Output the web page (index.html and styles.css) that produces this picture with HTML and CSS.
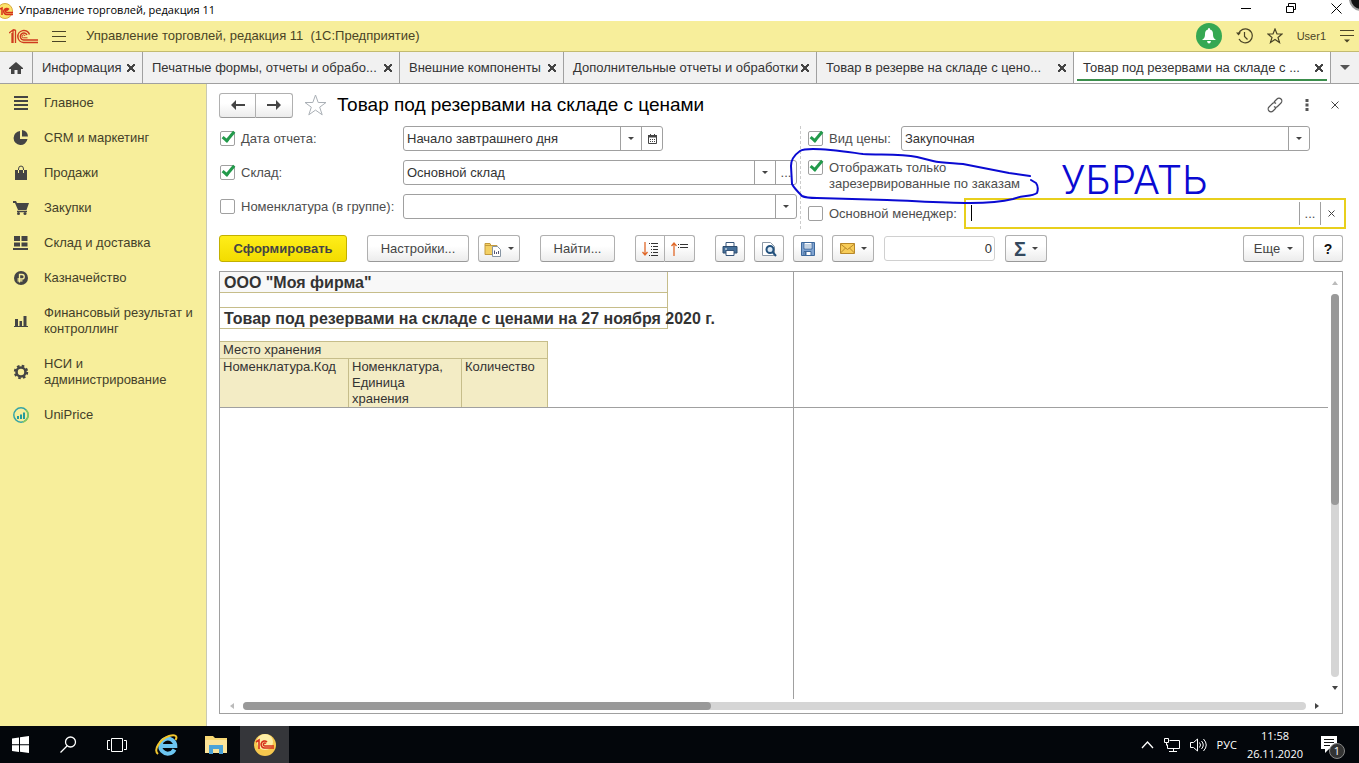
FILE: index.html
```html
<!DOCTYPE html>
<html lang="ru">
<head>
<meta charset="utf-8">
<title>Управление торговлей, редакция 11</title>
<link rel="stylesheet" href="styles.css">
</head>
<body>

<!-- window title -->
<div class="titlebar">
  <svg class="titlebar-logo" width="14" height="16" viewBox="0 0 14 16">
    <circle cx="5" cy="8" r="7.5" fill="#fbe36a" stroke="#d9a93c"/>
    <path d="M0 6l2-1v7M9 6.500a3 3 0 1 0-2 5h6M8 7.500a1.300 1.300 0 1 0-1 2h6" fill="none" stroke="#d6301c" stroke-width="1.500"/>
  </svg>
  <span class="titlebar-text">Управление торговлей, редакция 11</span>
  <div class="window-buttons">
    <button aria-label="Свернуть"><svg width="11" height="11"><path d="M0 5.500h10" stroke="#000" fill="none"/></svg></button>
    <button aria-label="Восстановить"><svg width="11" height="11"><path d="M.5 3.500h7v6h-7zM2.500 3.500v-3h7v6h-2" stroke="#000" fill="none"/></svg></button>
    <button aria-label="Закрыть"><svg width="11" height="11"><path d="M.5.500l10 10M10.500.500l-10 10" stroke="#000" fill="none"/></svg></button>
  </div>
  <div class="corner-badge"></div>
</div>

<!-- application bar -->
<header class="appbar">
  <svg class="logo" width="29" height="15" viewBox="0 0 29 15">
    <path d="M0 4l4-3v13M3 4v10M6.500 1v13M4 1h2.500" fill="none" stroke="#cf3a1e" stroke-width="1.300"/>
    <path d="M20.500 5.500a6 6 0 1 0-6 8H29M18 6a3.500 3.500 0 1 0-3.500 5H29" fill="none" stroke="#cf3a1e" stroke-width="1.500"/>
    <path d="M16 7a1.500 1.500 0 1 0-1.500 1.800h4" fill="none" stroke="#cf3a1e"/>
  </svg>
  <button class="bar-icon" aria-label="Меню"><svg width="14" height="11"><path d="M0 .5h14M0 5.500h14M0 10.500h14" stroke="#4a4426"/></svg></button>
  <span class="appbar-title">Управление торговлей, редакция 11&nbsp; (1С:Предприятие)</span>
  <div class="appbar-tools">
    <button class="bell" aria-label="Уведомления">
      <svg width="14" height="16" viewBox="0 0 14 16"><path d="M7 0c1 0 1 1 1 1.500 2 .5 3 2 3 4.500 0 3 .5 4 3 6H0c2.500-2 3-3 3-6 0-2.500 1-4 3-4.500C6 1 6 0 7 0zM5 13h4q-.5 2.500-2 2.500T5 13z" fill="#fff"/></svg>
    </button>
    <button class="bar-icon" aria-label="История">
      <svg width="17" height="16" viewBox="0 0 17 16"><path d="M2.500 6A7 7 0 1 1 3 11M8.500 4v4.500l3 3" fill="none" stroke="#4a4426" stroke-width="1.200"/><path d="M0 4.500h5l-2.500 3z" fill="#4a4426"/></svg>
    </button>
    <button class="bar-icon" aria-label="Избранное">
      <svg width="16" height="16" viewBox="0 0 16 16"><path d="M8 1l2 5h5l-4 3.500 1.500 5L8 11.500l-4.500 3 1.500-5L1 6h5z" fill="none" stroke="#4a4426" stroke-width="1.200"/></svg>
    </button>
    <a class="user" href="#">User1</a>
    <button class="bar-icon" aria-label="Сервис">
      <svg width="14" height="13"><path d="M0 .5h14M0 5.500h14" stroke="#4a4426"/><path d="M4 9.500h6l-3 3z" fill="#4a4426"/></svg>
    </button>
  </div>
</header>

<!-- open pages -->
<nav class="tabs">
  <a class="tab tab-home" href="#" aria-label="Начальная страница"><svg width="14" height="12" viewBox="0 0 14 12"><path d="M7 0l7 6v1h-2v5H8.500V8h-3v4H2V7H0V6z" fill="#444"/></svg></a>
  <a class="tab" href="#"><span>Информация</span><i class="close"></i></a>
  <a class="tab" href="#"><span>Печатные формы, отчеты и обрабо...</span><i class="close"></i></a>
  <a class="tab" href="#"><span>Внешние компоненты</span><i class="close"></i></a>
  <a class="tab" href="#"><span>Дополнительные отчеты и обработки</span><i class="close"></i></a>
  <a class="tab" href="#"><span>Товар в резерве на складе с цено...</span><i class="close"></i></a>
  <a class="tab active" href="#"><span>Товар под резервами на складе с ...</span><i class="close"></i></a>
  <button class="tab-more" aria-label="Все страницы"><svg width="10" height="5"><path d="M0 0h10L5 5z" fill="#555"/></svg></button>
</nav>

<div class="workspace">
  <nav class="sidebar">
    <a href="#"><svg width="16" height="16"><path d="M1 2h14M1 6h14M1 10h14M1 14h14" stroke="#444" stroke-width="2"/></svg>Главное</a>
    <a href="#"><svg width="16" height="16"><path d="M7 1v8h7.500A7 7 0 1 1 7 1z" fill="#444"/><path d="M9 0a7 7 0 0 1 6 6.500H9z" fill="#444"/></svg>CRM и маркетинг</a>
    <a href="#"><svg width="16" height="16"><path d="M2 5h12v10H2z" fill="#444"/><path d="M5.500 8V4q0-3 2.500-3t2.500 3v4" fill="none" stroke="#444"/><path d="M5.500 5v3M10.500 5v3" stroke="#f7ee9b"/></svg>Продажи</a>
    <a href="#"><svg width="16" height="16"><path d="M0 1h3l1 2h12l-2.500 7H5L2 3H0z" fill="#444"/><path d="M4 11.500h10" stroke="#444" stroke-width="1.500"/><circle cx="5.500" cy="13.500" r="1.500" fill="#444"/><circle cx="12" cy="13.500" r="1.500" fill="#444"/></svg>Закупки</a>
    <a href="#"><svg width="16" height="16"><path d="M1 1h6v5H1zM8.500 1h6v5h-6zM1 7.500h6v4H1zM8.500 7.500h6v4h-6zM0 13h15v2H0z" fill="#444"/></svg>Склад и доставка</a>
    <a href="#"><svg width="16" height="16"><circle cx="8" cy="8" r="7" fill="#444"/><path d="M6.500 12.500V4.500H9a2.200 2.200 0 0 1 0 4.500H4.500M4.500 10.800h5" fill="none" stroke="#f7ee9b" stroke-width="1.300"/></svg>Казначейство</a>
    <a href="#"><svg width="16" height="16"><path d="M2 6h3v7H2zM6.500 8h2.500v5H6.500zM10.500 3h3v10h-3zM1 13h14v1H1z" fill="#444"/></svg>Финансовый результат и контроллинг</a>
    <a href="#"><svg width="16" height="16"><circle cx="8" cy="8" r="4.500" fill="none" stroke="#444" stroke-width="2.600"/><circle cx="8" cy="8" r="6.200" fill="none" stroke="#444" stroke-width="2" stroke-dasharray="2.600 2.270"/></svg>НСИ и администрирование</a>
    <a href="#"><svg width="16" height="16"><circle cx="8" cy="8" r="7.200" fill="none" stroke="#35a3a5" stroke-width="1.500"/><path d="M13 3a7.200 7.200 0 0 1-3 12" fill="none" stroke="#8ccb56" stroke-width="1.500"/><path d="M4 9h2v3H4zM7 7.500h2V12H7zM10 5.500h2V12h-2z" fill="#259a9c"/></svg>UniPrice</a>
  </nav>

  <main class="page">
    <div class="page-head">
      <div class="button-group">
        <button class="btn" aria-label="Назад"><svg width="14" height="10"><path d="M5 0v4h9v2H5v4L0 5z" fill="#444"/></svg></button>
        <button class="btn" aria-label="Вперед"><svg width="14" height="10"><path d="M9 0v4H0v2h9v4l5-5z" fill="#444"/></svg></button>
      </div>
      <svg class="fav" width="23" height="22" viewBox="0 0 23 22"><path d="M11.500 1l2.700 7.500H22l-6.300 4.700 2.500 7.600-6.700-4.700-6.700 4.700 2.500-7.600L1 8.500h7.800z" fill="#fff" stroke="#aab0b6"/></svg>
      <h1>Товар под резервами на складе с ценами</h1>
      <div class="page-tools">
        <button aria-label="Ссылка"><svg width="16" height="16" viewBox="0 0 16 16"><path d="M7 5l3-3a2.600 2.600 0 0 1 4 4l-3.500 3.500a2.600 2.600 0 0 1-3.500 0M9 11l-3 3a2.600 2.600 0 0 1-4-4l3.500-3.500a2.600 2.600 0 0 1 3.500 0" fill="none" stroke="#555" stroke-width="1.200"/></svg></button>
        <button aria-label="Еще"><svg width="4" height="12"><path d="M.5 0h3v3h-3zM.5 4.500h3v3h-3zM.5 9h3v3h-3z" fill="#555"/></svg></button>
        <button aria-label="Закрыть"><svg width="8" height="8"><path d="M.5.500l7 7M7.500.500l-7 7" stroke="#444"/></svg></button>
      </div>
    </div>

    <form class="filters">
      <div class="filters-left">
        <div class="row">
          <input type="checkbox" id="use-date" checked><label for="use-date">Дата отчета:</label>
          <div class="field field-date">
            <input type="text" value="Начало завтрашнего дня" aria-label="Дата отчета">
            <button type="button" class="drop" aria-label="Выбрать"></button>
            <button type="button" aria-label="Календарь"><svg width="9" height="10"><path d="M.5 1.500h8v8h-8z" fill="none" stroke="#444"/><path d="M0 1h9v2.500H0zM2 0h1v2H2zM6 0h1v2H6zM2 5h1v1H2zM4 5h1v1H4zM6 5h1v1H6zM2 7h1v1H2zM4 7h1v1H4zM6 7h1v1H6z" fill="#444"/></svg></button>
          </div>
        </div>
        <div class="row">
          <input type="checkbox" id="use-store" checked><label for="use-store">Склад:</label>
          <div class="field">
            <input type="text" value="Основной склад" aria-label="Склад">
            <button type="button" class="drop" aria-label="Выбрать"></button>
            <button type="button" aria-label="Открыть список">...</button>
          </div>
        </div>
        <div class="row">
          <input type="checkbox" id="use-item"><label for="use-item">Номенклатура (в группе):</label>
          <div class="field">
            <input type="text" value="" aria-label="Номенклатура">
            <button type="button" class="drop" aria-label="Выбрать"></button>
          </div>
        </div>
      </div>

      <div class="filters-right">
        <div class="row row-price">
          <input type="checkbox" id="use-price" checked><label for="use-price">Вид цены:</label>
          <div class="field">
            <input type="text" value="Закупочная" aria-label="Вид цены">
            <button type="button" class="drop" aria-label="Выбрать"></button>
          </div>
        </div>
        <div class="row row-reserved">
          <input type="checkbox" id="only-reserved" checked><label for="only-reserved">Отображать только<br>зарезервированные по заказам</label>
        </div>
        <div class="row row-manager">
          <input type="checkbox" id="use-manager"><label for="use-manager">Основной менеджер:</label>
          <div class="field focused">
            <span class="caret"></span>
            <input type="text" value="" aria-label="Основной менеджер">
            <button type="button" aria-label="Открыть список">...</button>
            <button type="button" aria-label="Очистить"><svg width="7" height="7"><path d="M.5.500l6 6M6.500.500l-6 6" stroke="#444"/></svg></button>
          </div>
        </div>

        <!-- pen marks over the form -->
        <svg class="ink" width="250" height="56" viewBox="0 0 250 56">
          <path d="M239 27L218 24L172 15C160 14 150 14 142 12L126 8C110 5 90 6 72 5C50 2 38 0 22 0C16 0 12 0 9 2C2 7 0 11 0 17L1 35C3 39 8 44 11 47C15 49 20 49 26 49L96 51C125 52 150 54 179 54C195 54 210 53 222 50C232 46 240 48 246 44Q248 38 245 34L240 31" fill="none" stroke="#0a0ad2" stroke-width="2" stroke-linecap="round" stroke-linejoin="round"/>
        </svg>
        <span class="ink-text">УБРАТЬ</span>
      </div>
    </form>

    <div class="toolbar">
      <button class="btn btn-main">Сформировать</button>
      <div class="tool-set">
        <button class="btn btn-text">Настройки...</button>
        <button class="btn btn-menu" aria-label="Варианты отчета"><svg width="18" height="16"><path d="M1 2.500h5l1 2h6v9H1z" fill="#f3d064" stroke="#c49a3c"/><path d="M1 4.500h12" stroke="#c49a3c"/><path d="M8.500 5.500h5l3 3v7h-8z" fill="#fff" stroke="#8795a3"/><path d="M10.500 13V9.500M12.500 13v-2M14.500 13v-3" stroke="#557"/></svg><i class="arrow"></i></button>
      </div>
      <button class="btn btn-find">Найти...</button>
      <div class="button-group">
        <button class="btn btn-icon" aria-label="Развернуть"><svg width="17" height="16"><path d="M3 1v13M.5 11L3 14l2.500-3" fill="none" stroke="#e0692a" stroke-width="1.300"/><path d="M7 2.500h9M9 5.500h7M9 8.500h7M9 11.500h7M7 14.500h9" stroke="#333" stroke-dasharray="1 1 7"/></svg></button>
        <button class="btn btn-icon" aria-label="Свернуть"><svg width="17" height="16"><path d="M3 15V2M.5 5L3 2l2.500 3" fill="none" stroke="#e0692a" stroke-width="1.300"/><path d="M7 3.500h10M7 6.500h10" stroke="#333" stroke-dasharray="1 1 8"/></svg></button>
      </div>
      <div class="tool-set">
        <button class="btn btn-icon" aria-label="Печать"><svg width="16" height="16"><path d="M4 1.500h8V6H4z" fill="#fff" stroke="#37557a"/><path d="M1 5.500h14v6.500H1z" fill="#456f99" stroke="#2d4c6f"/><path d="M3 8h2" stroke="#fff"/><path d="M4 9.500h8v5H4z" fill="#fff" stroke="#37557a"/></svg></button>
        <button class="btn btn-icon" aria-label="Предварительный просмотр"><svg width="16" height="16"><path d="M1.500 1.500h8l4 4v9h-12z" fill="#fff" stroke="#8a97a5"/><circle cx="9" cy="8.500" r="3.500" fill="#dbe9f5" stroke="#24527e" stroke-width="2"/><path d="M11.500 11l3.500 4" stroke="#24527e" stroke-width="2"/></svg></button>
        <button class="btn btn-icon" aria-label="Сохранить"><svg width="16" height="16"><path d="M1.500 1.500h13v13h-13z" fill="#7fa3d0" stroke="#3e699c"/><path d="M4 1.500h8V8H4zM4 10.500h7v4H4z" fill="#fff" stroke="#3e699c"/><path d="M5 4h6M5 6h6" stroke="#8ba8c7"/><path d="M5.500 11v3" stroke="#3e699c" stroke-width="2"/></svg></button>
        <button class="btn btn-menu" aria-label="Отправить"><svg width="15" height="11"><path d="M.5.500h14v10H.5z" fill="#f7cc58" stroke="#b8882a"/><path d="M.5 1l7 5.500 7-5.500M.5 10l5-5M14.500 10l-5-5" fill="none" stroke="#b8882a"/></svg><i class="arrow"></i></button>
        <input class="total" type="text" value="0" aria-label="Сумма">
        <button class="btn btn-menu" aria-label="Функция"><b class="sigma">Σ</b><i class="arrow"></i></button>
      </div>
      <div class="tool-set tool-end">
        <button class="btn btn-more">Еще<i class="arrow"></i></button>
        <button class="btn btn-icon btn-help">?</button>
      </div>
    </div>

    <section class="report">
      <div class="sheet">
        <div class="cell-area top-left">
          <div class="caption caption-firm">ООО "Моя фирма"</div>
          <div class="caption-gap"></div>
          <div class="caption caption-title">Товар под резервами на складе с ценами на 27 ноября 2020 г.</div>
          <table>
            <colgroup><col class="col-code"><col class="col-unit"><col></colgroup>
            <tr><th colspan="3">Место хранения</th></tr>
            <tr><th>Номенклатура.Код</th><th>Номенклатура, Единица хранения</th><th>Количество</th></tr>
          </table>
        </div>
        <div class="cell-area top-right"></div>
        <div class="cell-area bottom-left"></div>
        <div class="cell-area"></div>
      </div>
      <div class="scroll scroll-v">
        <svg width="6" height="4"><path d="M0 4h6L3 0z" fill="#bbb"/></svg>
        <div class="track"><div class="thumb"></div></div>
        <svg width="6" height="4"><path d="M0 0h6L3 4z" fill="#444"/></svg>
      </div>
      <div class="scroll scroll-h">
        <svg width="4" height="6"><path d="M4 0v6L0 3z" fill="#bbb"/></svg>
        <div class="track"><div class="thumb"></div></div>
        <svg width="4" height="6"><path d="M0 0v6l4-3z" fill="#444"/></svg>
      </div>
    </section>
  </main>
</div>

<footer class="taskbar">
  <button aria-label="Пуск"><svg width="17" height="17"><path d="M0 2.500l7-1v6.700H0zM8 1.300L17 0v8.200H8zM0 9.200h7V16l-7-1zM8 9.200h9V17l-9-1.300z" fill="#fff"/></svg></button>
  <button aria-label="Поиск"><svg width="17" height="17"><circle cx="10.500" cy="6" r="5" fill="none" stroke="#fff" stroke-width="1.300"/><path d="M7 10L.5 16.500" stroke="#fff" stroke-width="1.300"/></svg></button>
  <button aria-label="Представление задач"><svg width="21" height="14"><path d="M4.500.500h11v13h-11zM3 2.500H.5v9H3M17 2.500h2.500v9H17" fill="none" stroke="#fff"/></svg></button>
  <button aria-label="Internet Explorer"><svg width="24" height="24" viewBox="0 0 24 24"><path d="M19.500 16.500a7.500 7.500 0 1 1 .8-3.500H6" fill="none" stroke="#6cc5f1" stroke-width="4"/><path d="M3 21C-2 17 5 6 14 3c6-2 9 0 6.500 4" fill="none" stroke="#f2c62e" stroke-width="2"/></svg></button>
  <button aria-label="Проводник"><svg width="22" height="20"><path d="M0 1h8l2 2h12v15H0z" fill="#f7d774"/><path d="M0 5h22v13H0z" fill="#fbe49a"/><path d="M4 10h14v9h-4v-5H8v5H4z" fill="#4ba3d8"/></svg></button>
  <button class="running" aria-label="1С:Предприятие"><svg width="22" height="22"><circle cx="11" cy="11" r="11" fill="#f6c84e"/><circle cx="11" cy="8" r="8" fill="#fdeea6"/><path d="M2 8l3-2v9M13 8a3.500 3.500 0 1 0-2 6h9M12 9.500a1.500 1.500 0 1 0-1 2.500h9" fill="none" stroke="#d6301c" stroke-width="1.600"/></svg></button>
  <div class="tray">
    <svg width="13" height="8"><path d="M1 7l5.500-6L12 7" fill="none" stroke="#fff" stroke-width="1.300"/></svg>
    <svg width="16" height="14"><path d="M5.500 2.500h10v8H3.500v-4M9.500 10.500v3M5 13.500h8M.5.500h4v4h-4zM2.500 4.500v3" fill="none" stroke="#fff"/></svg>
    <svg width="17" height="14"><path d="M.5 4.500h3l4-3.500v12l-4-3.500h-3zM9.500 4.500q2 2.500 0 5M11.500 3q3.500 4 0 8M13.500 1q5.500 6 0 12" fill="none" stroke="#fff"/></svg>
    <span>РУС</span>
    <div class="clock">11:58<br>26.11.2020</div>
    <button class="notices" aria-label="Центр уведомлений"><svg width="16" height="17"><path d="M0 0h16v13H8l-4 4v-4H0z" fill="#fff"/><path d="M3 3.500h10M3 6.500h10M3 9.500h6" stroke="#111"/></svg><span class="count">1</span></button>
  </div>
</footer>

</body>
</html>
```

FILE: styles.css
```css
* {
  box-sizing: border-box;
}

body {
  margin: 0;
  height: 100vh;
  display: flex;
  flex-direction: column;
  overflow: hidden;
  font: 13px/16px "Liberation Sans", Arial, sans-serif;
  color: #4d4d4d;
  background: #fff;
}

button {
  margin: 0;
  padding: 0;
  border: none;
  background: none;
  font: inherit;
  color: inherit;
  display: flex;
  align-items: center;
  justify-content: center;
}

a {
  color: inherit;
  text-decoration: none;
}

svg {
  flex: none;
}

/* window title */
.titlebar {
  position: relative;
  height: 21px;
  flex: none;
  display: flex;
  align-items: center;
  overflow: hidden;
}

.titlebar-text {
  flex: 1;
  margin-left: 5px;
  padding-bottom: 2px;
  font: 11px/16px "Open Sans", "Noto Sans", sans-serif;
  color: #000;
}

.window-buttons {
  display: flex;
  gap: 34px;
  margin-right: 17px;
  padding-bottom: 5px;
}

.corner-badge {
  position: absolute;
  right: -14px;
  top: -13px;
  width: 24px;
  height: 24px;
  border: 2px solid #999;
  border-radius: 50%;
  background: #111;
}

/* application bar */
.appbar {
  height: 31px;
  flex: none;
  display: flex;
  align-items: center;
  padding: 0 5px 0 9px;
  background: #f7ee9b;
  border-bottom: 1px solid #c3bb70;
  color: #4a4426;
}

.logo {
  margin-right: 14px;
}

.appbar-title {
  flex: 1;
  margin-left: 20px;
}

.appbar-tools {
  display: flex;
  align-items: center;
  gap: 14px;
}

.bell {
  width: 26px;
  height: 26px;
  border-radius: 50%;
  background: #36a853;
}

.user {
  font-size: 11px;
}

/* open pages */
.tabs {
  height: 32px;
  flex: none;
  display: grid;
  grid-template-columns: 32px 110fr 257fr 164fr 253fr 257fr 257fr 29px;
  background: #f1f1f1;
  border-bottom: 1px solid #a0a0a0;
}

.tab {
  display: flex;
  align-items: center;
  justify-content: space-between;
  min-width: 0;
  padding: 0 7px 0 9px;
  border-left: 1px solid #a0a0a0;
  color: #333;
}

.tab span {
  white-space: nowrap;
}

.tab-home {
  justify-content: center;
  padding: 0;
  border-left: none;
}

.tab.active {
  background: linear-gradient(#3b8e4c, #3b8e4c) center bottom 2px / calc(100% - 6px) 2px no-repeat #fff;
}

.close {
  width: 8px;
  height: 8px;
  background:
    linear-gradient(45deg, transparent 40%, #444 40%, #444 60%, transparent 60%),
    linear-gradient(-45deg, transparent 40%, #444 40%, #444 60%, transparent 60%);
}

.tab-more {
  border-left: 1px solid #a0a0a0;
}

/* sections */
.workspace {
  flex: 1;
  min-height: 0;
  display: flex;
}

.sidebar {
  width: 207px;
  flex: none;
  padding-top: 2px;
  background: #f7ee9b;
  border-right: 1px solid #c9c9b4;
  color: #443f2a;
}

.sidebar a {
  display: flex;
  align-items: center;
  gap: 15px;
  padding: 9px 10px 10px 13px;
}

/* report page */
.page {
  flex: 1;
  min-width: 0;
  display: flex;
  flex-direction: column;
  padding: 8px 16px 12px 12px;
}

.page-head {
  display: flex;
  align-items: center;
  height: 26px;
}

.button-group {
  display: flex;
}

.button-group .btn:first-child {
  border-radius: 3px 0 0 3px;
}

.button-group .btn:last-child {
  border-left: none;
  border-radius: 0 3px 3px 0;
}

.page-head .btn {
  width: 37px;
  height: 25px;
}

.fav {
  margin: 0 10px 0 11px;
}

h1 {
  flex: 1;
  margin: 0;
  font-size: 19px;
  line-height: 24px;
  font-weight: normal;
  color: #000;
}

.page-tools {
  display: flex;
  gap: 22px;
  margin-right: 4px;
}

.filters {
  display: grid;
  grid-template-columns: 578fr 546fr;
  gap: 3px;
  margin: 8px -3px 6px 0;
}

.filters-left {
  display: flex;
  flex-direction: column;
  gap: 9px;
}

.filters-right {
  position: relative;
  padding-left: 6px;
  border-left: 1px dashed #ccc;
}

.row {
  display: flex;
  align-items: center;
}

.filters-left label {
  width: 162px;
  flex: none;
}

.row label {
  white-space: nowrap;
}

input[type="checkbox"] {
  appearance: none;
  flex: none;
  position: relative;
  width: 15px;
  height: 15px;
  margin: 0 6px 0 1px;
  border: 1px solid #a0a0a0;
  border-radius: 2px;
  background: #fff;
}

input[type="checkbox"]:checked::after {
  content: "";
  position: absolute;
  left: 4px;
  top: -3px;
  width: 4px;
  height: 10px;
  border: solid #229a4b;
  border-width: 0 3px 3px 0;
  transform: rotate(40deg);
}

.field {
  flex: 1;
  min-width: 0;
  height: 25px;
  display: flex;
  border: 1px solid #a0a0a0;
  border-radius: 3px;
  background: #fff;
}

.field input {
  flex: 1;
  min-width: 0;
  padding: 0 3px;
  border: none;
  outline: none;
  background: none;
  font: inherit;
  color: #333;
}

.field button {
  width: 21px;
  border-left: 1px solid #a0a0a0;
}

.field-date {
  flex: none;
  width: 260px;
}

.drop::after,
.arrow {
  content: "";
  border: solid transparent;
  border-width: 3px 3px 0;
  border-top-color: #444;
}

.row-price {
  margin-right: 36px;
}

.row-price label {
  width: 72px;
}

.row-reserved {
  align-items: flex-start;
  margin: 9px 0 6px;
}

.row-manager label {
  width: 135px;
}

.field.focused {
  height: 31px;
  padding: 2px;
  border: 2px solid #e8cf1c;
  border-radius: 0;
}

.focused button:last-child {
  width: 22px;
}

.caret {
  width: 1px;
  margin: 3px 0 4px 3px;
  background: #000;
}

.ink {
  position: absolute;
  left: -10px;
  top: 23px;
  overflow: visible;
  pointer-events: none;
}

.ink-text {
  position: absolute;
  left: 260px;
  top: 34px;
  font: 300 40px/40px Inter, "Liberation Sans", sans-serif;
  color: #0a0ad2;
  pointer-events: none;
}

/* commands */
.toolbar {
  display: flex;
  gap: 20px;
  margin-bottom: 9px;
}

.tool-set {
  display: flex;
  gap: 9px;
}

.tool-end {
  margin-left: auto;
}

.btn {
  height: 27px;
  border: 1px solid #b0b0b0;
  border-bottom-color: #999;
  border-radius: 3px;
  background: linear-gradient(#fff 40%, #ececec);
  color: #444;
}

.btn-main {
  width: 128px;
  border-color: #c2b000;
  background: linear-gradient(#ffee1a, #f2dc00);
  font-weight: bold;
}

.btn-text {
  width: 102px;
}

.btn-find {
  width: 75px;
}

.btn-icon {
  width: 30px;
}

.btn-menu {
  width: 42px;
  gap: 6px;
}

.btn-more {
  width: 61px;
  gap: 7px;
}

.btn-help {
  font-size: 14px;
  font-weight: bold;
  color: #111;
}

.sigma {
  font-size: 20px;
  color: #34495e;
}

.total {
  width: 111px;
  height: 25px;
  margin: 1px;
  padding: 0 2px;
  border: 1px solid #d0d0d0;
  border-radius: 3px;
  font: inherit;
  color: #333;
  text-align: right;
}

/* spreadsheet */
.report {
  flex: 1;
  min-height: 0;
  display: grid;
  grid-template-columns: 1fr 14px;
  grid-template-rows: 1fr 14px;
  border: 1px solid #a0a0a0;
}

.sheet {
  display: grid;
  grid-template-columns: 574px 1fr;
  grid-template-rows: 136px 1fr;
  color: #333;
}

.top-left,
.bottom-left {
  border-right: 1px solid #a0a0a0;
}

.top-left,
.top-right {
  border-bottom: 1px solid #a0a0a0;
}

.caption {
  width: 448px;
  height: 21px;
  padding-left: 4px;
  border: solid #c6bd8a;
  border-width: 0 1px 1px 0;
  font-size: 16px;
  line-height: 22px;
  font-weight: bold;
  white-space: nowrap;
}

.caption-firm {
  background: #f8f8f8;
}

.caption-gap {
  width: 448px;
  height: 15px;
  border: solid #c6bd8a;
  border-width: 0 1px 1px 0;
}

.top-left table {
  width: 328px;
  height: 66px;
  margin-top: 12px;
  table-layout: fixed;
  border-collapse: separate;
  border-spacing: 0;
  border-top: 1px solid #c6bd8a;
  background: #f3ecc5;
}

.top-left th {
  padding: 0 3px;
  border-right: 1px solid #c6bd8a;
  font-weight: normal;
  text-align: left;
  vertical-align: top;
}

.top-left th[colspan] {
  border-bottom: 1px solid #c6bd8a;
}

.col-code {
  width: 129px;
}

.col-unit {
  width: 113px;
}

.scroll {
  display: flex;
  align-items: center;
  gap: 9px;
}

.scroll-v {
  flex-direction: column;
  padding: 9px 0;
}

.scroll-h {
  padding: 0 9px 0 10px;
}

.track {
  flex: 1;
  border-radius: 4px;
  background: #d5d5d5;
}

.thumb {
  border-radius: 4px;
  background: #999;
}

.scroll-v .track {
  width: 8px;
}

.scroll-v .thumb {
  height: 55%;
}

.scroll-h .track,
.scroll-h .thumb {
  height: 8px;
}

.scroll-h .thumb {
  width: 44%;
}

/* system taskbar */
.taskbar {
  height: 37px;
  flex: none;
  display: flex;
  padding: 0 14px 0 0;
  background: #03060b;
  color: #fff;
  font-family: "Open Sans", "Noto Sans", sans-serif;
  font-size: 11px;
}

.taskbar > button {
  width: 49px;
}

.taskbar > button:first-child {
  width: 44px;
  padding-right: 4px;
}

.taskbar .running {
  background: #35363a;
}

.tray {
  display: flex;
  align-items: center;
  gap: 10px;
  margin-left: auto;
}

.clock {
  line-height: 18px;
  text-align: center;
}

.notices {
  position: relative;
  margin: 0 8px;
}

.count {
  position: absolute;
  left: 8px;
  top: 7px;
  width: 16px;
  height: 16px;
  border: 1px solid #888;
  border-radius: 50%;
  background: #333;
  line-height: 14px;
}
```
